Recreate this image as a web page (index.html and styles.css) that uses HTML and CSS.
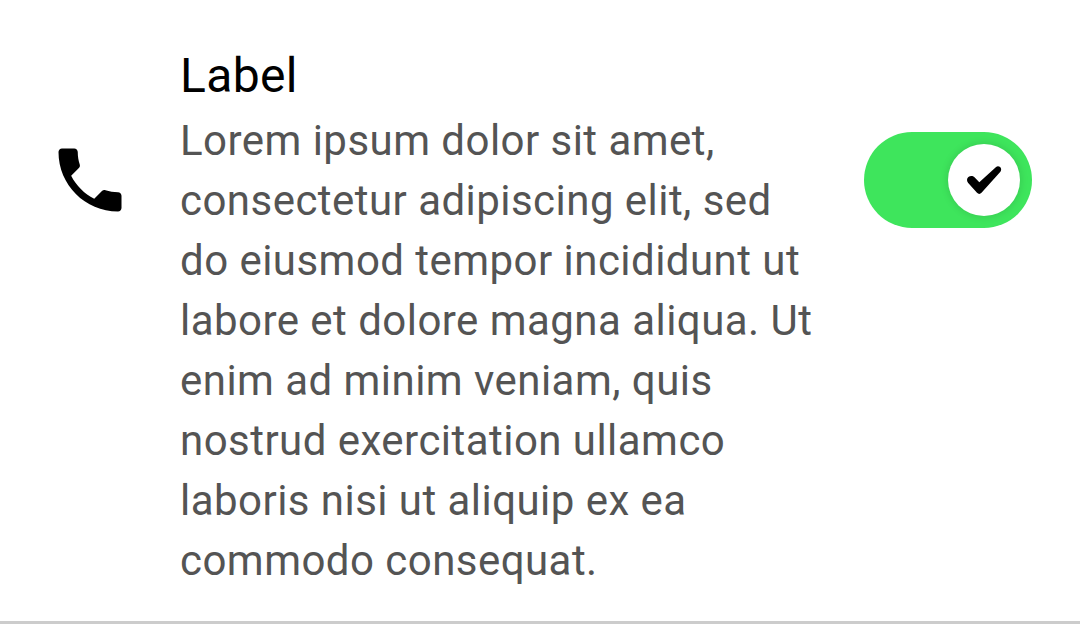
FILE: index.html
```html
<!DOCTYPE html>
<html lang="en">
<head>
<meta charset="utf-8">
<title>Switch item</title>
<link rel="stylesheet" href="styles.css">
</head>
<body>
<label class="item">
  <svg class="item-icon" viewBox="0 0 24 24" aria-hidden="true"><path d="M20 15.5c-1.250 0-2.450-.2-3.570-.57-.1-.03-.21-.05-.31-.05-.26 0-.51.1-.71.29l-2.200 2.200c-2.830-1.440-5.150-3.750-6.590-6.590l2.200-2.200c.28-.28.36-.67.25-1.020C8.700 6.450 8.500 5.250 8.500 4c0-.55-.45-1-1-1H4c-.55 0-1 .45-1 1 0 9.390 7.610 17 17 17 .55 0 1-.45 1-1v-3.500c0-.55-.45-1-1-1z"/></svg>
  <span class="item-text">
    <span class="item-label">Label</span>
    <span class="item-helper">Lorem ipsum dolor sit amet, consectetur adipiscing elit, sed do eiusmod tempor incididunt ut labore et dolore magna aliqua. Ut enim ad minim veniam, quis nostrud exercitation ullamco laboris nisi ut aliquip ex ea commodo consequat.</span>
  </span>
  <span class="switch">
    <span class="thumb"><svg class="check" viewBox="0 0 72 72" aria-hidden="true"><path d="M19 36C19 32.200 24 30.600 26.500 33.200L31.300 38.200 47.800 23.200C51 20.400 54.900 24.500 52.400 27.700L33.500 48.800C32.200 50.300 30.300 50.300 29 48.800L20.200 39Q19 37.600 19 36Z"/></svg></span>
  </span>
</label>
</body>
</html>
```
FILE: styles.css
```css
body {
  margin: 0;
  background: #fff;
  font-family: Roboto, sans-serif;
}
.item {
  display: flex;
  align-items: flex-start;
  box-sizing: border-box;
  height: 624px;
  padding: 40px 48px 0;
  border-bottom: 3px solid #ccc;
}
.item-icon {
  width: 84px;
  height: 84px;
  margin-top: 98px;
  flex: none;
}
.item-text {
  width: 640px;
  margin-left: 48px;
  flex: none;
}
.item-label,
.item-helper {
  display: block;
}
.item-label {
  font-size: 48px;
  line-height: 72px;
  letter-spacing: .35px;
  color: #000;
}
.item-helper {
  margin-top: -1px;
  font-size: 42px;
  line-height: 60px;
  letter-spacing: .46px;
  color: #545454;
}
.switch {
  display: flex;
  justify-content: flex-end;
  box-sizing: border-box;
  width: 168px;
  height: 96px;
  padding: 12px;
  margin-top: 92px;
  margin-left: auto;
  border-radius: 48px;
  background: #3ee55c;
}
.thumb {
  width: 72px;
  height: 72px;
  border-radius: 50%;
  background: #fff;
  box-shadow: 0 0 9px rgba(0, 0, 0, .14);
}
.check {
  display: block;
}
```
